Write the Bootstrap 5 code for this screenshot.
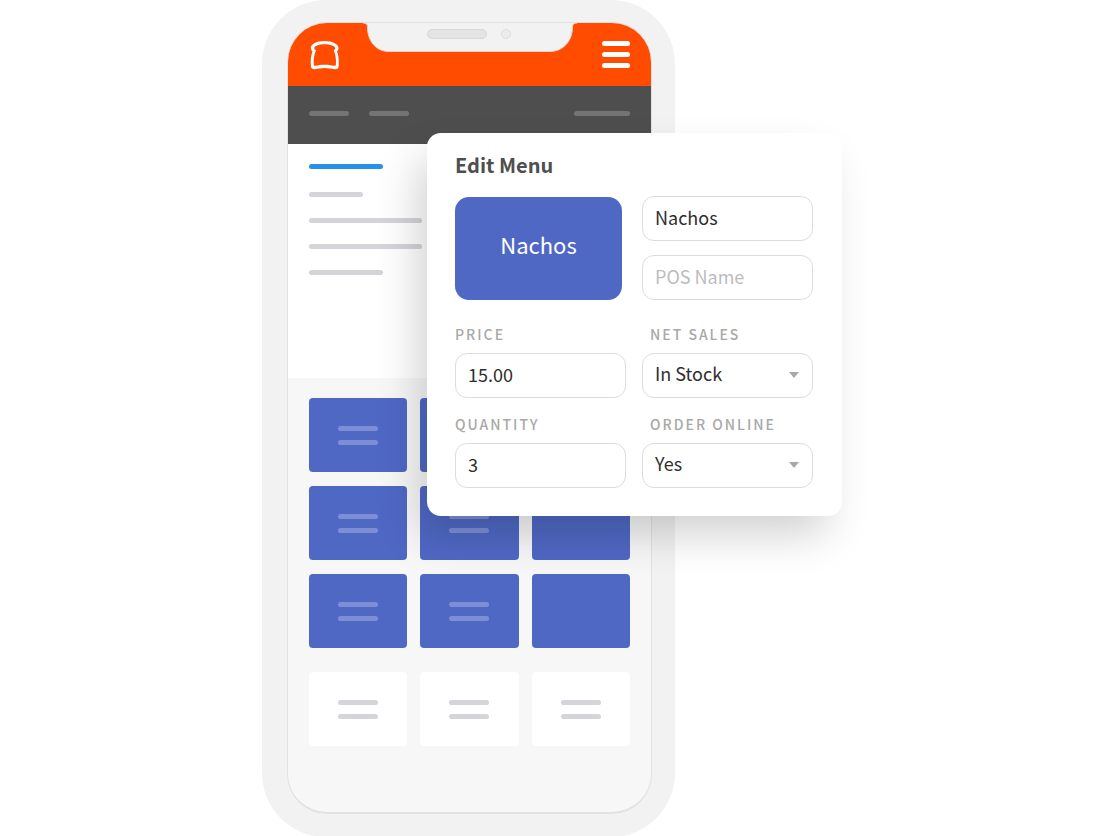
<!DOCTYPE html>
<html lang="en">
<head>
<meta charset="utf-8">
<meta name="viewport" content="width=device-width, initial-scale=1">
<title>Edit Menu</title>
<link href="https://cdn.jsdelivr.net/npm/bootstrap@5.3.0/dist/css/bootstrap.min.css" rel="stylesheet">
<style>
  :root { --line: #d4d4d9; --indigo: #4f68c4; --orange: #ff4c00; --shell: #f2f2f2; }
  body { font-family: "Noto Sans CJK SC", "Noto Sans", sans-serif; background: #fff; }
  .scene { max-width: 580px; }
  .phone { max-width: 413px; padding: 22px 23px 23px 25px; background: var(--shell); border-radius: 64px; }
  .screen { border: 1px solid #e2e2e2; border-bottom-width: 2px; border-radius: 40px; background: #f7f7f7; }
  .app-head { background: var(--orange); height: 63px; padding: 18px 21px 0 22px; }
  .notch { top: -1px; left: 0; right: 0; }
  .menu-btn { width: 28px; gap: 6px; }
  .menu-btn span { height: 5px; border-radius: 3px; background: #fff; }
  .tabs-bar { background: #4e4e4e; height: 58px; padding: 0 21px 4px; }
  .stroke { height: 5px; border-radius: 3px; background: var(--line); }
  .w-40 { width: 40px; } .w-54 { width: 54px; } .w-56 { width: 56px; } .w-74 { width: 74px; } .w-113 { width: 113px; }
  .tabs-bar .stroke { background: #747474; }
  .summary { background: #fff; height: 234px; padding: 20px 21px; gap: 21px; }
  .summary .accent { background: #2492ea; margin-bottom: 2px; }
  .tiles { display: grid; grid-template-columns: repeat(3, 1fr); gap: 14px 13px; padding: 20px 21px 0; }
  .tile { height: 74px; border-radius: 4px; background: var(--indigo); gap: 9px; }
  .tile .stroke { background: #7c8fd6; }
  .tiles.plain { padding: 24px 21px 66px; }
  .plain .tile { background: #fff; }
  .plain .tile .stroke { background: var(--line); }
  .editor { top: 133px; right: 0; width: 415px; max-width: 100%; padding: 17px 29px 28px 28px; border-radius: 14px; background: #fff;
    box-shadow: -12px 22px 44px -4px rgba(0,0,0,.19); }
  .editor h1 { font-size: 20px; line-height: 30px; margin-bottom: 16px; font-weight: 700; color: #4e4e4e; }
  .fields { display: grid; grid-template-columns: 1fr 1fr; column-gap: 16px; }
  .names { gap: 14px; }
  .preview { background: var(--indigo); color: #fff; border: 0; border-radius: 14px; font-size: 22px; padding: 0 0 8px; margin-top: 1px; }
  .field { height: 45px; border: 1px solid #dcdcdc; border-radius: 12px; padding: 0 12px 4px; font-size: 18px; color: #2e2e2e; background-color: #fff; }
  .field::placeholder { color: #bcbcc0; }
  .pick { background-image: url("data:image/svg+xml,%3Csvg xmlns='http://www.w3.org/2000/svg' viewBox='0 0 10 6'%3E%3Cpath d='M0 0h10L5 6z' fill='%23a8a8a8'/%3E%3C/svg%3E");
    background-size: 10px 6px; background-position: right 13px top 18px; }
  .cap { font-size: 14px; line-height: 20px; font-weight: 500; letter-spacing: 2px; color: #a8a8a8; text-transform: uppercase; margin-bottom: 9px; }
</style>
</head>
<body>
<main class="scene position-relative w-100 mx-auto">
  <div class="phone w-100">
    <div class="screen overflow-hidden">
      <header class="app-head position-relative d-flex justify-content-between align-items-start">
        <a href="#" aria-label="Home" class="d-flex">
          <svg width="30" height="29" viewBox="0 0 30 29">
            <path fill="#fff" fill-rule="evenodd" d="M14.500 0C7 0 .8 2.800 .8 7C.8 8.600 1.500 9.600 2.500 10.300C1 14 .4 20 .9 25C1.200 27.800 2.600 28.500 5 28.200C8 27.800 10.500 27 14.500 27C18.500 27 21.500 27.800 24.500 28.200C27 28.500 28.500 27.800 28.700 25C29.100 20 28.500 14 27 10.300C28 9.600 28.500 8.600 28.500 7C28.500 2.800 22 0 14.500 0ZM14.500 3.200C20.500 3.200 25.300 5 25.300 7.300C25.300 8.400 24.600 8.600 23.600 9.300C25.600 13.500 26.300 18.500 25.900 23.500C25.800 24.800 25.300 25 24 24.800C21 24.200 18 23.700 14.500 23.700C11 23.700 8.500 24.200 5.600 24.800C4.300 25 3.900 24.800 3.800 23.500C3.400 18.500 4.100 13.500 6 9.300C5 8.600 4.200 8.400 4.200 7.300C4.200 5 8.500 3.200 14.500 3.200Z"/>
          </svg>
        </a>
        <button type="button" class="menu-btn d-flex flex-column border-0 bg-transparent p-0" aria-label="Open menu"><span class="w-100"></span><span class="w-100"></span><span class="w-100"></span></button>
        <svg class="notch position-absolute mx-auto" width="214" height="32" viewBox="0 0 214 32">
          <path d="M0 0H214V1C211 1 209.500 2 209.500 5C209.500 19 200 29.500 187 29.500H26C13 29.500 4.500 19 4.500 5C4.500 2 3 1 0 1Z" fill="#f2f2f2" stroke="#dfd3ce"/>
          <path d="M0 0H214" stroke="#f2f2f2" stroke-width="2"/>
          <rect x="64.500" y="7.500" width="59" height="9" rx="4.500" fill="#e4e4e4" stroke="#d8d8d8"/>
          <circle cx="143" cy="12" r="4.500" fill="#ececec" stroke="#dcdcdc"/>
        </svg>
      </header>
      <div class="tabs-bar d-flex align-items-center">
        <div class="stroke w-40 me-3"></div><div class="stroke w-40 ms-1"></div><div class="stroke w-56 ms-auto"></div>
      </div>
      <section class="summary d-flex flex-column">
        <div class="stroke accent w-74"></div>
        <div class="stroke w-54"></div>
        <div class="stroke w-113"></div>
        <div class="stroke w-113"></div>
        <div class="stroke w-74"></div>
      </section>
      <section class="tiles">
        <div class="tile d-flex flex-column align-items-center justify-content-center"><div class="stroke w-40"></div><div class="stroke w-40"></div></div>
        <div class="tile d-flex flex-column align-items-center justify-content-center"><div class="stroke w-40"></div><div class="stroke w-40"></div></div>
        <div class="tile"></div>
        <div class="tile d-flex flex-column align-items-center justify-content-center"><div class="stroke w-40"></div><div class="stroke w-40"></div></div>
        <div class="tile d-flex flex-column align-items-center justify-content-center"><div class="stroke w-40"></div><div class="stroke w-40"></div></div>
        <div class="tile"></div>
        <div class="tile d-flex flex-column align-items-center justify-content-center"><div class="stroke w-40"></div><div class="stroke w-40"></div></div>
        <div class="tile d-flex flex-column align-items-center justify-content-center"><div class="stroke w-40"></div><div class="stroke w-40"></div></div>
        <div class="tile"></div>
      </section>
      <section class="tiles plain">
        <div class="tile d-flex flex-column align-items-center justify-content-center"><div class="stroke w-40"></div><div class="stroke w-40"></div></div>
        <div class="tile d-flex flex-column align-items-center justify-content-center"><div class="stroke w-40"></div><div class="stroke w-40"></div></div>
        <div class="tile d-flex flex-column align-items-center justify-content-center"><div class="stroke w-40"></div><div class="stroke w-40"></div></div>
      </section>
    </div>
  </div>

  <form class="editor position-absolute">
    <h1>Edit Menu</h1>
    <div class="fields mb-4">
      <button type="button" class="preview me-1">Nachos</button>
      <div class="names d-flex flex-column">
        <input class="form-control field" type="text" value="Nachos" aria-label="Menu name">
        <input class="form-control field" type="text" placeholder="POS Name" aria-label="POS name">
      </div>
    </div>
    <div class="fields">
      <div class="mb-3"><label class="cap d-block" for="price">Price</label><input class="form-control field" id="price" type="text" value="15.00"></div>
      <div class="mb-3"><label class="cap d-block ps-2" for="sales">Net Sales</label><select class="form-select field pick" id="sales"><option>In Stock</option></select></div>
      <div><label class="cap d-block" for="qty">Quantity</label><input class="form-control field" id="qty" type="text" value="3"></div>
      <div><label class="cap d-block ps-2" for="online">Order Online</label><select class="form-select field pick" id="online"><option>Yes</option></select></div>
    </div>
  </form>
</main>
<script src="https://cdn.jsdelivr.net/npm/bootstrap@5.3.0/dist/js/bootstrap.bundle.min.js"></script>
</body>
</html>
